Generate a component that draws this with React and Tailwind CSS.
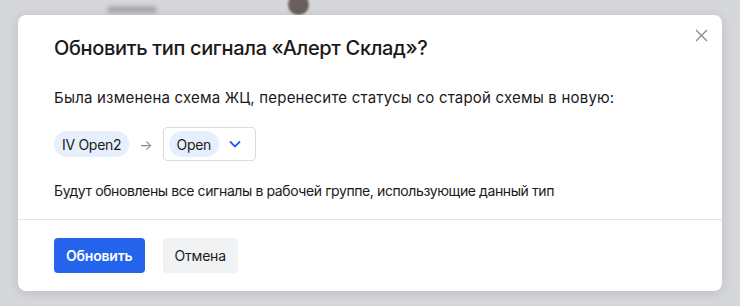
import React from "react";

const font = { fontFamily: "Inter, 'Noto Sans', sans-serif" };

const Chip = ({ children }) => (
  <span className="inline-flex items-center h-[26px] px-[8px] rounded-full bg-[#e6f0fd] text-[14px] tracking-[-0.3px] text-[#1a1a1a]">
    {children}
  </span>
);

export default function App() {
  return (
    <div
      className="relative w-[740px] h-[306px] overflow-hidden bg-[#d6d7da] pt-[15px] pl-[18px]"
      style={font}
    >
      {/* blurred page behind the overlay */}
      <div className="absolute left-[107px] top-[6px] w-[50px] h-[7px] rounded bg-[#a9aaad] blur-[2px]" />
      <div className="absolute left-[288px] top-[-6px] w-[21px] h-[21px] rounded-full bg-[#6b5f5c] blur-[1px]" />

      <div className="relative w-[704px] h-[276px] rounded-[8px] bg-white shadow-[0_2px_12px_rgba(0,0,0,0.12)] flex flex-col">
        <button className="absolute right-[11px] top-[10px] w-[20px] h-[20px] flex items-center justify-center text-[#8a8a8a]">
          <svg width="13" height="13" viewBox="0 0 13 13" fill="none" stroke="currentColor" strokeWidth="1.3">
            <path d="M1 1l11 11M12 1L1 12" />
          </svg>
        </button>

        <div className="px-[36px] pt-[20px] flex-1">
          <h2 className="text-[20px] leading-[26px] font-medium text-[#1a1a1a] tracking-[-0.35px]">
            Обновить тип сигнала «Алерт Склад»?
          </h2>
          <p className="mt-[27px] text-[15px] leading-[20px] tracking-[0.2px] text-[#1a1a1a]">
            Была изменена схема ЖЦ, перенесите статусы со старой схемы в новую:
          </p>
          <div className="mt-[19px] flex items-center">
            <Chip>IV Open2</Chip>
            <span className="ml-[10px] text-[#8c8c8c] text-[14px]">→</span>
            <div className="ml-[10px] flex items-center h-[34px] pl-[5px] pr-[14px] rounded-[4px] border border-[#dcdcdc]">
              <Chip>Open</Chip>
              <svg className="ml-[10px]" width="12" height="8" viewBox="0 0 12 8" fill="none" stroke="#2a5ee8" strokeWidth="1.8">
                <path d="M1 1.5l5 5 5-5" />
              </svg>
            </div>
          </div>
          <p className="mt-[21px] text-[14px] leading-[18px] tracking-[-0.4px] text-[#1a1a1a]">
            Будут обновлены все сигналы в рабочей группе, использующие данный тип
          </p>
        </div>

        <div className="border-t border-[#e4e4e4] h-[72px] px-[36px] flex items-center gap-[18px]">
          <button className="h-[35px] px-[12px] rounded-[4px] bg-[#2463eb] text-white text-[14px] font-semibold tracking-[-0.2px]">
            Обновить
          </button>
          <button className="h-[35px] px-[12px] rounded-[4px] bg-[#f1f2f4] text-[#1a1a1a] text-[14px] tracking-[-0.2px]">
            Отмена
          </button>
        </div>
      </div>
    </div>
  );
}
